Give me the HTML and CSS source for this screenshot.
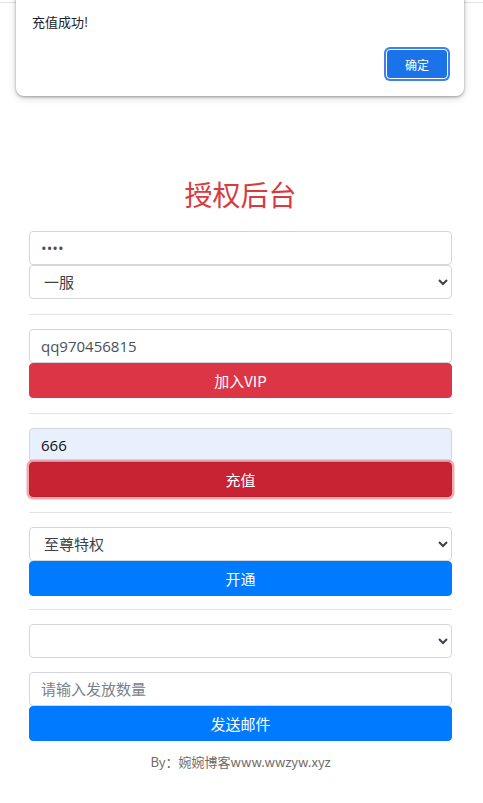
FILE: index.html
```html
<!DOCTYPE html>
<html lang="zh-CN">
<head>
<meta charset="utf-8">
<title>授权后台</title>
<link rel="stylesheet" href="styles.css">
</head>
<body>
<div class="topline"></div>
<main class="page">
  <h1 class="title">授权后台</h1>
  <div class="group">
    <input class="field" type="password" value="1234">
    <select class="field select"><option>一服</option></select>
  </div>
  <hr class="sep">
  <div class="group">
    <input class="field" type="text" value="qq970456815">
    <button class="btn btn-danger">加入VIP</button>
  </div>
  <hr class="sep">
  <div class="group">
    <input class="field autofill" type="text" value="666">
    <button class="btn btn-danger-active">充值</button>
  </div>
  <hr class="sep">
  <div class="group">
    <select class="field select"><option>至尊特权</option></select>
    <button class="btn btn-primary">开通</button>
  </div>
  <hr class="sep sep-last">
  <div class="group">
    <select class="field select gap-below"><option></option></select>
    <input class="field" type="text" placeholder="请输入发放数量">
    <button class="btn btn-primary">发送邮件</button>
  </div>
  <p class="footer">By：婉婉博客www.wwzyw.xyz</p>
</main>

<div class="dialog">
  <p class="dialog-msg">充值成功!</p>
  <div class="dialog-actions">
    <button class="dialog-btn">确定</button>
  </div>
</div>
</body>
</html>
```
FILE: styles.css
```css
* { box-sizing: border-box; }
html, body { margin: 0; padding: 0; background: #fff; }
body {
  font-family: "Open Sans", "Noto Sans CJK SC", sans-serif;
  color: #495057;
}
.topline {
  height: 3px;
  border-bottom: 1px solid #e2e2e2;
}
.page {
  margin: 0 31px 0 29px;
  padding-top: 174px;
}
.title {
  margin: 0 0 20px;
  text-align: center;
  font-family: "Noto Sans CJK SC", sans-serif;
  font-weight: 400;
  font-size: 28px;
  line-height: 34px;
  color: #d93a3e;
}
.group { display: flex; flex-direction: column; }
.field {
  display: block;
  width: 100%;
  height: 34px;
  margin: 0;
  padding: 0 11px;
  border: 1px solid #d4d6d9;
  border-radius: 4px;
  background: #fff;
  font-family: "Open Sans", "Noto Sans CJK SC", sans-serif;
  font-size: 15px;
  color: #495057;
  outline: none;
}
.field::placeholder { color: #7b8289; }
.select { padding-left: 10px; color: #3c4248; }
.gap-below { margin-bottom: 14px; }
.autofill { background: #e8f0fe; color: #111; }
.btn {
  display: block;
  width: 100%;
  height: 35px;
  margin: 0;
  border: 1px solid transparent;
  border-radius: 4px;
  font-family: "Noto Sans CJK SC", sans-serif;
  font-size: 15px;
  color: #fff;
  cursor: pointer;
}
.btn-danger { background: #dc3545; border-color: #dc3545; }
.btn-danger-active {
  background: #c82333;
  border-color: #bd2130;
  box-shadow: 0 0 0 2.5px rgba(225, 83, 97, 0.5);
}
.btn-primary { background: #007bff; border-color: #007bff; }
.sep {
  margin: 15px 0 14px;
  border: 0;
  border-top: 1px solid #e3e3e3;
  height: 0;
}
.sep-last { margin: 13px 0 14px; }
.footer {
  margin: 13px 0 0;
  text-align: center;
  font-family: "Noto Sans CJK SC", sans-serif;
  font-size: 13px;
  line-height: 16px;
  color: #6f6a66;
}
.dialog {
  position: absolute;
  left: 16px;
  top: -10px;
  width: 448px;
  height: 106px;
  background: #fff;
  border-radius: 0 0 8px 8px;
  box-shadow: 0 1px 3px rgba(0,0,0,0.35), 0 2px 8px rgba(0,0,0,0.15);
  padding: 23px 16px 0;
  font-family: "Noto Sans CJK SC", sans-serif;
}
.dialog-msg {
  margin: 0;
  font-size: 13px;
  line-height: 18px;
  color: #202124;
}
.dialog-actions {
  display: flex;
  justify-content: flex-end;
  margin-top: 18px;
}
.dialog-btn {
  width: 62px;
  height: 30px;
  background: #1a73e8;
  border: 1px solid #fff;
  border-radius: 4px;
  box-shadow: 0 0 0 2px #3b82f0;
  color: #fff;
  font-family: "Noto Sans CJK SC", sans-serif;
  font-size: 12px;
  padding: 0;
}
```
